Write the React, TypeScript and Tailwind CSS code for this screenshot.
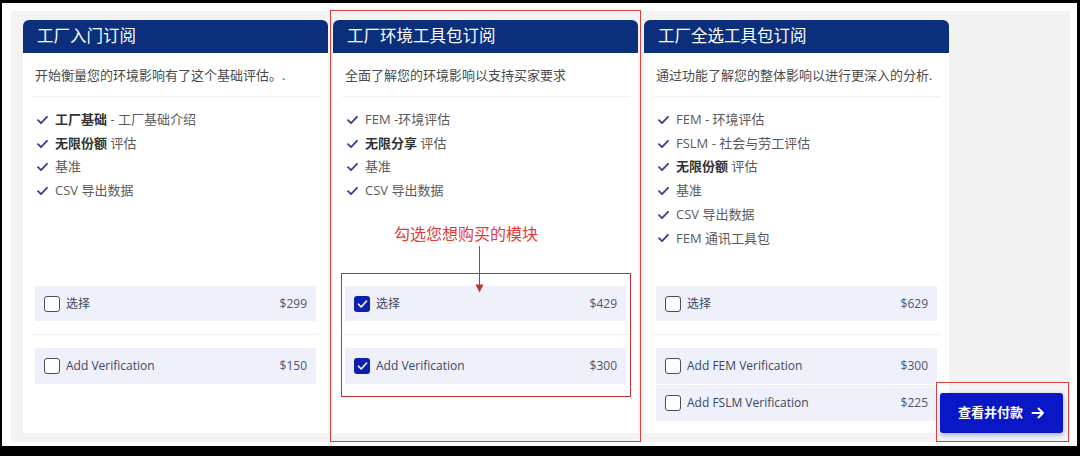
import React from "react";

type Feature = { bold?: string; text: string };
type Option = { label: string; price: string; checked?: boolean };
type Card = {
  title: string;
  desc: string;
  features: Feature[];
  main: Option;
  extras: Option[];
};

const cards: Card[] = [
  {
    title: "工厂入门订阅",
    desc: "开始衡量您的环境影响有了这个基础评估。.",
    features: [
      { bold: "工厂基础", text: " - 工厂基础介绍" },
      { bold: "无限份额", text: " 评估" },
      { text: "基准" },
      { text: "CSV 导出数据" },
    ],
    main: { label: "选择", price: "$299" },
    extras: [{ label: "Add Verification", price: "$150" }],
  },
  {
    title: "工厂环境工具包订阅",
    desc: "全面了解您的环境影响以支持买家要求",
    features: [
      { text: "FEM -环境评估" },
      { bold: "无限分享", text: " 评估" },
      { text: "基准" },
      { text: "CSV 导出数据" },
    ],
    main: { label: "选择", price: "$429", checked: true },
    extras: [{ label: "Add Verification", price: "$300", checked: true }],
  },
  {
    title: "工厂全选工具包订阅",
    desc: "通过功能了解您的整体影响以进行更深入的分析.",
    features: [
      { text: "FEM - 环境评估" },
      { text: "FSLM - 社会与劳工评估" },
      { bold: "无限份额", text: " 评估" },
      { text: "基准" },
      { text: "CSV 导出数据" },
      { text: "FEM 通讯工具包" },
    ],
    main: { label: "选择", price: "$629" },
    extras: [
      { label: "Add FEM Verification", price: "$300" },
      { label: "Add FSLM Verification", price: "$225" },
    ],
  },
];

const FONT = { fontFamily: '"Open Sans","Noto Sans CJK SC",sans-serif' };

function Check() {
  return (
    <svg width="11" height="10" viewBox="0 0 11 10" className="shrink-0">
      <path d="M1 5.2 L4 8.2 L10 1.8" fill="none" stroke="#3a3d8a" strokeWidth="1.8" strokeLinecap="round" strokeLinejoin="round" />
    </svg>
  );
}

function Box({ checked }: { checked?: boolean }) {
  if (checked) {
    return (
      <div className="w-[16px] h-[16px] rounded-[3px] bg-[#0d1fb0] flex items-center justify-center shrink-0">
        <svg width="11" height="10" viewBox="0 0 11 10">
          <path d="M1.5 5.2 L4.2 8 L9.6 2" fill="none" stroke="#ffffff" strokeWidth="1.6" strokeLinecap="round" strokeLinejoin="round" />
        </svg>
      </div>
    );
  }
  return <div className="w-[16px] h-[16px] rounded-[3px] border-[1.5px] border-[#4a4f5e] bg-white shrink-0" />;
}

function OptionRow({ o, h }: { o: Option; h: string }) {
  return (
    <div className={`flex items-center ${h} bg-[#eef0fa] pl-[9px] pr-[9px] text-[12px] text-[#3d4760]`}>
      <Box checked={o.checked} />
      <span className="ml-[6px] flex-1">{o.label}</span>
      <span className="text-[#4d566e]">{o.price}</span>
    </div>
  );
}

function CardView({ c }: { c: Card }) {
  return (
    <div className="w-[305px] h-[413px] flex flex-col bg-white rounded-t-[6px]">
      <div className="h-[33px] bg-[#0b2f7b] rounded-t-[6px] flex items-center pl-[14px] text-white text-[16.5px]">
        {c.title}
      </div>
      <div className="pl-[12px] pt-[12px] pb-[11px] text-[13px] leading-[20px] text-[#4a4a4a]">{c.desc}</div>
      <div className="h-px bg-[#f2f2f2] ml-[9px] mr-[8px]" />
      <div className="h-[189px] pt-[11px] pl-[14px]">
        {c.features.map((f, i) => (
          <div key={i} className="flex items-center gap-[7px] h-[23.7px] text-[13px] text-[#5a5a5a]">
            <Check />
            <span>
              {f.bold && <b className="font-bold text-[#333]">{f.bold}</b>}
              {f.text}
            </span>
          </div>
        ))}
      </div>
      <div className="px-[12px]">
        <OptionRow o={c.main} h="h-[35px]" />
        <div className="h-px bg-[#f1f1f1] my-[13px] mx-[-3px]" />
        <div className="flex flex-col gap-px">
          {c.extras.map((o, i) => (
            <OptionRow key={i} o={o} h="h-[36px]" />
          ))}
        </div>
      </div>
    </div>
  );
}

export default function App() {
  return (
    <div className="relative w-[1080px] h-[456px] bg-black pt-[3px] pl-[2px] pr-[3px] pb-[10px]" style={FONT}>
      <div className="w-full h-full bg-white pt-[8px] pl-[9px] pr-[7px] pb-[4px]">
        <div className="w-full h-full bg-[#f3f3f4] pt-[9px] pl-[12px] flex">
          <CardView c={cards[0]} />
          <div className="w-[5px]" />
          <CardView c={cards[1]} />
          <div className="w-[6px]" />
          <CardView c={cards[2]} />
        </div>
      </div>

      {/* annotations */}
      <div className="absolute left-[330px] top-[10px] w-[311px] h-[432px] border border-[#d9423f]" />
      <div className="absolute left-[341px] top-[273px] w-[290px] h-[124px] border border-[#c8302e]" />
      <div className="absolute left-[394px] top-[224px] text-[16px] leading-[20px] text-[#e23b3b]">勾选您想购买的模块</div>
      <div className="absolute left-[479px] top-[246px] w-px h-[40px] bg-[#c8302e]" />
      <svg className="absolute left-[475px] top-[284px]" width="9" height="9" viewBox="0 0 9 9">
        <path d="M0.5 0.5 L8.5 0.5 L4.5 8.5 Z" fill="#c8302e" />
      </svg>

      <div className="absolute left-[936px] top-[382px] w-[133px] h-[60px] border border-[#d9423f]" />
      <div className="absolute left-[940px] top-[393px] w-[123px] h-[40px] rounded-[3px] bg-[#0a17c6] shadow-[0_2px_5px_rgba(20,40,160,0.35)] flex items-center justify-center gap-[8px] text-white text-[13px] font-bold">
        <span>查看并付款</span>
        <svg width="14" height="12" viewBox="0 0 14 12">
          <path d="M1.5 6 H12 M7.5 1.5 L12 6 L7.5 10.5" fill="none" stroke="#fff" strokeWidth="2" strokeLinecap="round" strokeLinejoin="round" />
        </svg>
      </div>
    </div>
  );
}
